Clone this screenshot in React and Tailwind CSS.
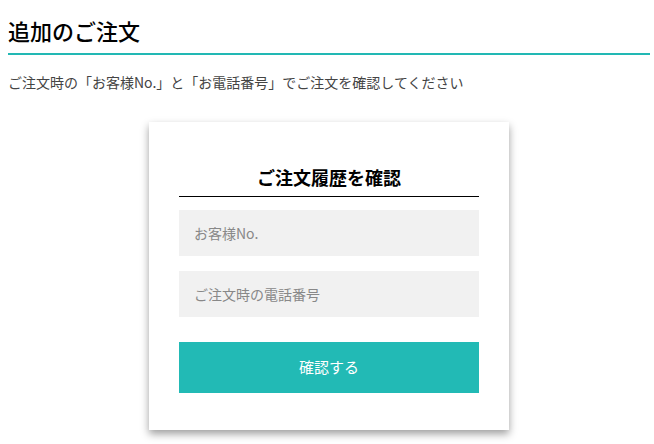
import React from 'react';

const App = () => {
  return (
    <div className="w-[654px] h-[444px] bg-white overflow-hidden font-['Noto_Sans_CJK_JP',sans-serif] pl-2 pr-[4px]">
      {/* Page title */}
      <div className="pt-[14px]">
        <h2 className="text-[22px] leading-[32px] font-medium text-black pb-[7px] border-b-2 border-[#22b8b4]">
          追加のご注文
        </h2>
        <p className="mt-[17px] text-[14px] leading-[20px] text-[#444]">
          ご注文時の「お客様No.」と「お電話番号」でご注文を確認してください
        </p>
      </div>

      {/* Lookup card */}
      <div className="flex justify-center mt-[30px]">
        <div className="w-[360px] bg-white shadow-[0_4px_8px_rgba(0,0,0,0.38)] px-[30px] pt-[42px] pb-[37px]">
          <h3 className="text-center text-[18px] leading-[26px] font-bold text-black pb-[6px] border-b border-black">
            ご注文履歴を確認
          </h3>
          <div className="flex flex-col gap-[15px] mt-[13px]">
            <input
              type="text"
              placeholder="お客様No."
              className="h-[46px] w-full bg-[#f1f1f1] px-[15px] text-[14px] text-[#333] placeholder:text-[#888] outline-none"
            />
            <input
              type="text"
              placeholder="ご注文時の電話番号"
              className="h-[46px] w-full bg-[#f1f1f1] px-[15px] text-[14px] text-[#333] placeholder:text-[#888] outline-none"
            />
          </div>
          <button className="mt-[25px] h-[51px] w-full bg-[#22bab5] text-white text-[15px]">
            確認する
          </button>
        </div>
      </div>
    </div>
  );
};

export default App;
